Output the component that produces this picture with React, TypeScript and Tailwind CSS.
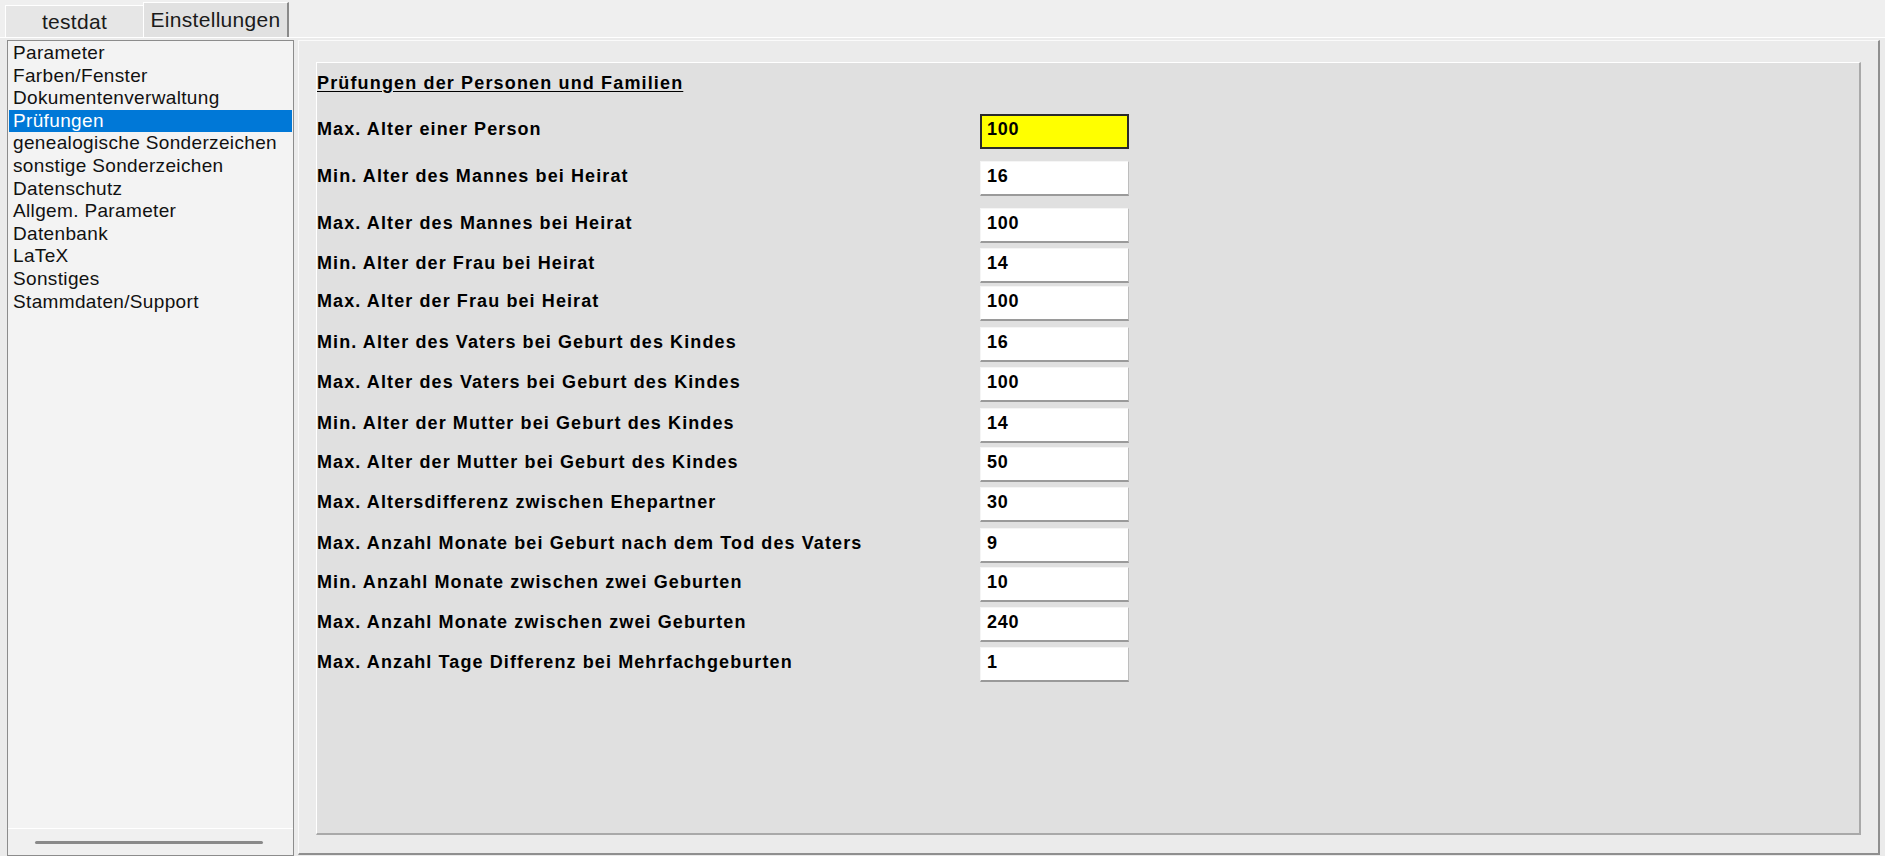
const items = [
  "Parameter",
  "Farben/Fenster",
  "Dokumentenverwaltung",
  "Prüfungen",
  "genealogische Sonderzeichen",
  "sonstige Sonderzeichen",
  "Datenschutz",
  "Allgem. Parameter",
  "Datenbank",
  "LaTeX",
  "Sonstiges",
  "Stammdaten/Support",
];

// gaps between the fields are uneven in the original form, so each row carries its own margin
const rows = [
  { label: "Max. Alter einer Person", value: "100", mt: "mt-[20px]", active: true },
  { label: "Min. Alter des Mannes bei Heirat", value: "16", mt: "mt-[12px]" },
  { label: "Max. Alter des Mannes bei Heirat", value: "100", mt: "mt-[12px]" },
  { label: "Min. Alter der Frau bei Heirat", value: "14", mt: "mt-[5px]" },
  { label: "Max. Alter der Frau bei Heirat", value: "100", mt: "mt-[3px]" },
  { label: "Min. Alter des Vaters bei Geburt des Kindes", value: "16", mt: "mt-[6px]" },
  { label: "Max. Alter des Vaters bei Geburt des Kindes", value: "100", mt: "mt-[5px]" },
  { label: "Min. Alter der Mutter bei Geburt des Kindes", value: "14", mt: "mt-[6px]" },
  { label: "Max. Alter der Mutter bei Geburt des Kindes", value: "50", mt: "mt-[4px]" },
  { label: "Max. Altersdifferenz zwischen Ehepartner", value: "30", mt: "mt-[5px]" },
  { label: "Max. Anzahl Monate bei Geburt nach dem Tod des Vaters", value: "9", mt: "mt-[6px]" },
  { label: "Min. Anzahl Monate zwischen zwei Geburten", value: "10", mt: "mt-[4px]" },
  { label: "Max. Anzahl Monate zwischen zwei Geburten", value: "240", mt: "mt-[5px]" },
  { label: "Max. Anzahl Tage Differenz bei Mehrfachgeburten", value: "1", mt: "mt-[5px]" },
];

export default function App() {
  return (
    <div
      className="w-[1885px] h-[856px] bg-[#ededed] flex flex-col text-black overflow-hidden"
      style={{ fontFamily: '"Liberation Sans", Arial, sans-serif' }}
    >
      {/* tab strip */}
      <div className="h-[37px] flex items-end pl-[5px] bg-[#efefef]">
        <div className="h-[32px] w-[138px] bg-[#e6e6e6] border-t border-l border-white flex items-center justify-center text-[21px] tracking-[0.3px] text-[#1a1a1a]">
          testdat
        </div>
        <div className="h-[35px] w-[146px] bg-[#e1e1e1] border-t border-l border-white border-r-2 border-r-[#8a8a8a] flex items-center justify-center text-[21px] tracking-[0.3px] text-[#1a1a1a]">
          Einstellungen
        </div>
      </div>

      {/* tab page */}
      <div className="flex-1 flex border-t border-white bg-[#ebebeb] pl-[7px] pt-[2px] pr-[5px] gap-[4px]">
        {/* list */}
        <div className="w-[287px] h-[816px] border border-[#8c8c8c] bg-[#f3f3f3] flex flex-col">
          <div className="flex-1 pt-[1px] px-[1px]">
            {items.map((item) => (
              <div
                key={item}
                className={
                  item === "Prüfungen"
                    ? "h-[22.6px] leading-[22.6px] pl-[4px] text-[19px] tracking-[0.35px] bg-[#0078d7] text-white"
                    : "h-[22.6px] leading-[22.6px] pl-[4px] text-[19px] tracking-[0.35px] text-[#111]"
                }
              >
                {item}
              </div>
            ))}
          </div>
          <div className="h-[27px] border-t border-white bg-[#f0f0f0] flex items-center pl-[27px]">
            <div className="w-[228px] h-[3px] bg-[#8a8a8a] rounded-full" />
          </div>
        </div>

        {/* content panel */}
        <div className="flex-1 h-[815px] border-t border-l border-[#fafafa] border-r-2 border-b-2 border-r-[#8f8f8f] border-b-[#8f8f8f] bg-[#ebebeb] pl-[17px] pt-[21px] pr-[17px] pb-[18px]">
          <div className="h-full border-t border-l border-white border-r-2 border-b-2 border-r-[#a9a9a9] border-b-[#a9a9a9] bg-[#e0e0e0] flex flex-col pt-[9px]">
            <div className="h-[22px] leading-[22px] text-[18px] font-bold underline underline-offset-2 tracking-[1.15px]">
              Prüfungen der Personen und Familien
            </div>
            {rows.map((row) => (
              <div key={row.label} className={`${row.mt} flex items-center h-[35px]`}>
                <div className="w-[663px] pb-[4px] text-[18px] font-bold tracking-[1.1px] whitespace-nowrap">
                  {row.label}
                </div>
                {row.active ? (
                  <div className="w-[149px] h-[35px] border-2 border-[#2a2a2a] bg-[#ffff00] pl-[5px] pb-[4px] flex items-center text-[18px] font-bold tracking-[0.8px]">
                    {row.value}
                  </div>
                ) : (
                  <div className="w-[149px] h-[35px] border-t border-l border-[#f5f5f5] border-b-2 border-r border-b-[#9a9a9a] border-r-[#bdbdbd] bg-white pl-[6px] pb-[4px] flex items-center text-[18px] font-bold tracking-[0.8px]">
                    {row.value}
                  </div>
                )}
              </div>
            ))}
          </div>
        </div>
      </div>
    </div>
  );
}
